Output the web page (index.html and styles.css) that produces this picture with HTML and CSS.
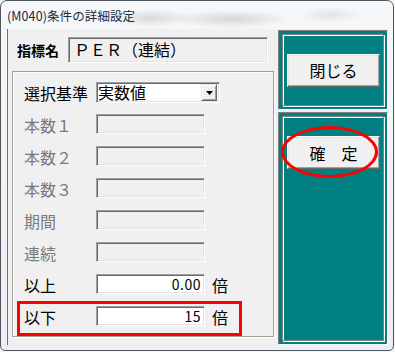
FILE: index.html
```html
<!DOCTYPE html>
<html lang="ja">
<head>
<meta charset="utf-8">
<title>(M040)条件の詳細設定</title>
<link rel="stylesheet" href="styles.css">
</head>
<body>
<div class="window">
  <div class="titlebar"><span class="title">(M040)条件の詳細設定</span></div>
  <div class="client">
    <div class="left">
      <div class="name-row">
        <span class="name-label">指標名</span>
        <div class="name-box">ＰＥＲ（連結）</div>
      </div>
      <div class="group">
        <div class="row">
          <span class="lbl">選択基準</span>
          <div class="combo">
            <span class="combo-text">実数値</span>
            <span class="combo-btn"><svg width="7" height="4" viewBox="0 0 7 4"><polygon points="0,0 7,0 3.5,4" fill="#000"/></svg></span>
          </div>
        </div>
        <div class="row disabled"><span class="lbl">本数１</span><div class="field"></div></div>
        <div class="row disabled"><span class="lbl">本数２</span><div class="field"></div></div>
        <div class="row disabled"><span class="lbl">本数３</span><div class="field"></div></div>
        <div class="row disabled"><span class="lbl">期間</span><div class="field"></div></div>
        <div class="row disabled"><span class="lbl">連続</span><div class="field"></div></div>
        <div class="row"><span class="lbl">以上</span><div class="field enabled">0.00</div><span class="unit">倍</span></div>
        <div class="row"><span class="lbl">以下</span><div class="field enabled">15</div><span class="unit">倍</span></div>
        <div class="mark-rect"></div>
      </div>
    </div>
    <div class="right">
      <div class="panel panel-top">
        <div class="frame frame-center"><button class="btn">閉じる</button></div>
      </div>
      <div class="panel panel-bottom">
        <div class="frame frame-top"><button class="btn">確　定</button></div>
        <div class="mark-ellipse"></div>
      </div>
    </div>
  </div>
</div>
</body>
</html>
```
FILE: styles.css
```css
* { box-sizing: border-box; }
html, body { margin: 0; padding: 0; }
body {
  width: 395px;
  height: 352px;
  overflow: hidden;
  background: #f3f4f6;
  font-family: "Noto Sans CJK JP", "Noto Sans", sans-serif;
}
.window {
  width: 394px;
  height: 351px;
  border: 1px solid #50565e;
  border-radius: 7px 7px 5px 5px;
  background:
    radial-gradient(ellipse 40px 9px at 150px 17px, rgba(150,150,150,0.30), transparent),
    radial-gradient(ellipse 60px 9px at 230px 18px, rgba(140,140,140,0.30), transparent),
    radial-gradient(ellipse 30px 8px at 330px 14px, rgba(170,170,170,0.25), transparent),
    linear-gradient(#f6f7f8, #eceef1);
  display: flex;
  flex-direction: column;
}
.titlebar {
  height: 28px;
  display: flex;
  align-items: center;
  padding-left: 6px;
  padding-top: 3px;
}
.title {
  font-size: 12.5px;
  line-height: 1;
  color: #1c2b44;
  letter-spacing: 0.1px;
}
.client {
  margin-left: 6px;
  width: 382px;
  height: 316px;
  border-left: 1px solid #6e6e6e;
  background: #f0f0f0;
  display: flex;
  gap: 4px;
  padding: 1px 1px 0 4px;
}
.left {
  width: 262px;
  display: flex;
  flex-direction: column;
}
.name-row {
  margin-top: 7px;
  height: 26px;
  display: flex;
  align-items: center;
}
.name-label {
  width: 56px;
  padding-left: 5px;
  font-size: 14px;
  font-weight: bold;
  color: #000;
  line-height: 20px;
}
.name-box {
  width: 200px;
  height: 26px;
  border: 1px solid;
  border-color: #a0a0a0 #fff #fff #a0a0a0;
  box-shadow: inset 1px 1px 0 #696969, inset -1px -1px 0 #e3e3e3;
  background: #f0f0f0;
  font-size: 16px;
  line-height: 22px;
  padding-left: 5px;
  color: #000;
}
.group {
  position: relative;
  margin-top: 8px;
  height: 266px;
  border: 1px solid #a0a0a0;
  box-shadow: inset 1px 1px 0 #fff, 1px 1px 0 #fff;
  padding: 10px 0 0 11px;
  display: flex;
  flex-direction: column;
  gap: 12px;
}
.row {
  height: 20px;
  display: flex;
  align-items: flex-start;
}
.lbl {
  width: 72px;
  font-size: 16px;
  line-height: 20px;
  padding-top: 1px;
  color: #000;
}
.disabled .lbl { color: #7a7a7a; }
.combo {
  width: 124px;
  height: 21px;
  border: 1px solid;
  border-color: #a0a0a0 #fff #fff #a0a0a0;
  box-shadow: inset 1px 1px 0 #696969, inset -1px -1px 0 #e3e3e3;
  background: #fff;
  padding: 2px 2px 2px 1px;
  display: flex;
  align-items: center;
}
.combo-text {
  font-size: 16px;
  line-height: 17px;
  color: #000;
}
.combo-btn {
  margin-left: auto;
  width: 16px;
  height: 17px;
  background: #f0f0f0;
  border: 1px solid;
  border-color: #e3e3e3 #696969 #696969 #e3e3e3;
  box-shadow: inset 1px 1px 0 #fff, inset -1px -1px 0 #a0a0a0;
  display: flex;
  align-items: center;
  justify-content: center;
}
.combo-btn svg { display: block; }
.field {
  width: 109px;
  height: 20px;
  border: 1px solid;
  border-color: #a0a0a0 #fff #fff #a0a0a0;
  box-shadow: inset 1px 1px 0 #696969, inset -1px -1px 0 #e3e3e3;
  background: #f0f0f0;
  font-size: 14px;
  line-height: 18px;
  text-align: right;
  padding-right: 3px;
  color: #000;
  letter-spacing: 0.5px;
}
.field.enabled { background: #fff; }
.unit {
  margin-left: 7px;
  font-size: 16px;
  line-height: 20px;
  padding-top: 1px;
  color: #000;
}
.mark-rect {
  position: absolute;
  left: 4px;
  top: 229px;
  width: 225px;
  height: 35px;
  border: 3px solid #ff0000;
}
.right {
  width: 110px;
  display: flex;
  flex-direction: column;
  gap: 2px;
}
.panel {
  position: relative;
  background: #008080;
  border: 1px solid;
  border-color: #808080 #fff #fff #808080;
  padding: 3px;
}
.panel-top { height: 80px; }
.panel-bottom { flex: 1; }
.frame {
  height: 100%;
  border: 1px solid #808080;
  box-shadow: inset 1px 1px 0 #fff, 1px 1px 0 #fff;
  display: flex;
  padding-left: 4px;
}
.frame-center { align-items: center; }
.frame-top { align-items: flex-start; padding-top: 19px; }
.btn {
  width: 93px;
  height: 33px;
  margin: 0;
  padding: 0;
  background: #f0f0f0;
  border: 1px solid;
  border-color: #fff #696969 #696969 #fff;
  box-shadow: inset -1px -1px 0 #a0a0a0, inset 1px 1px 0 #e3e3e3;
  font-family: "Noto Sans CJK JP", "Noto Sans", sans-serif;
  font-size: 16px;
  line-height: 20px;
  color: #000;
}
.mark-ellipse {
  position: absolute;
  left: 2px;
  top: 13px;
  width: 97px;
  height: 52px;
  border: 3px solid #ff0000;
  border-radius: 50%;
}
```
